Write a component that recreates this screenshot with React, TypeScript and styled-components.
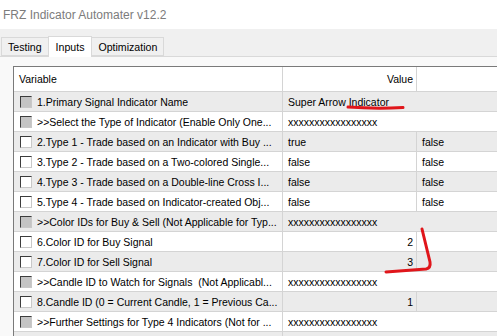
import { createGlobalStyle } from "styled-components";
import styled from "styled-components";

const GlobalStyle = createGlobalStyle`
  html, body {
    margin: 0;
    padding: 0;
    background: #ffffff;
    overflow: hidden;
  }
  body {
    font-family: "Liberation Sans", Arial, sans-serif;
  }
`;

const Window = styled.div`
  width: 497px;
  height: 336px;
  display: flex;
  flex-direction: column;
  overflow: hidden;
  position: relative;
`;

const TitleBar = styled.div`
  height: 29px;
  display: flex;
  align-items: center;
  padding-left: 3px;
  font-size: 12px;
  color: #7c7c7c;
  background: #ffffff;
`;

const TabStrip = styled.div`
  height: 27px;
  background: #f0f0f0;
  border-bottom: 1px solid #d9d9d9;
  display: flex;
  align-items: flex-end;
  padding-left: 2px;
`;

const Tab = styled.div<{ $active?: boolean }>`
  height: ${(p) => (p.$active ? "20px" : "17px")};
  padding: 0 ${(p) => (p.$active ? "7px" : "6px")};
  margin-bottom: ${(p) => (p.$active ? "-1px" : "0")};
  display: flex;
  align-items: center;
  font-size: 10.6px;
  color: #000;
  background: ${(p) => (p.$active ? "#ffffff" : "#f0f0f0")};
  border: 1px solid #d9d9d9;
  border-bottom: ${(p) => (p.$active ? "none" : "1px solid #d9d9d9")};
  margin-left: -1px;
  position: relative;
  z-index: ${(p) => (p.$active ? 1 : 0)};
`;

const Panel = styled.div`
  flex: 1;
  background: #f9f9f9;
  padding: 9px 0 0 13px;
  overflow: hidden;
`;

const Grid = styled.div`
  width: 560px;
  border-top: 1px solid #7a7a7a;
  border-left: 1px solid #7a7a7a;
  background: #ffffff;
  font-size: 10.5px;
  color: #000;
`;

const Row = styled.div<{ $shade?: boolean; $head?: boolean }>`
  display: grid;
  grid-template-columns: 269px 134px 1fr;
  height: ${(p) => (p.$head ? "24px" : "19px")};
  background: ${(p) => (p.$shade ? "#ebebeb" : "#ffffff")};
  border-bottom: 1px solid #d4d4d4;
`;

const Cell = styled.div<{ $align?: "left" | "right"; $span?: boolean; $last?: boolean }>`
  display: flex;
  align-items: center;
  justify-content: ${(p) => (p.$align === "right" ? "flex-end" : "flex-start")};
  padding: 0 ${(p) => (p.$align === "right" ? "3px" : "4px")} 0 5px;
  grid-column: ${(p) => (p.$span ? "span 2" : "auto")};
  border-right: ${(p) => (p.$last || p.$span ? "none" : "1px solid #d4d4d4")};
  white-space: nowrap;
  overflow: hidden;
  min-width: 0;
`;

const NameCell = styled(Cell)`
  padding-left: 6px;
  gap: 5px;
`;

const Label = styled.span`
  overflow: hidden;
  text-overflow: ellipsis;
  white-space: pre;
`;

const Check = styled.span<{ $disabled?: boolean }>`
  flex: 0 0 auto;
  width: 10px;
  height: 10px;
  border: 1px solid;
  border-color: #3c3c3c #c8c8c8 #c8c8c8 #3c3c3c;
  background: ${(p) => (p.$disabled ? "#c4c4c4" : "#ffffff")};
`;

const Marks = styled.svg`
  position: absolute;
  left: 0;
  top: 0;
  pointer-events: none;
`;

type Item = {
  name: string;
  value: string;
  extra?: string;
  disabled?: boolean;
  span?: boolean;
  right?: boolean;
};

const XS = "xxxxxxxxxxxxxxxxx";

const items: Item[] = [
  { name: "1.Primary Signal Indicator Name", value: "Super Arrow Indicator", disabled: true, span: true },
  { name: ">>Select the Type of Indicator (Enable Only One...", value: XS, disabled: true, span: true },
  { name: "2.Type 1 - Trade based on an Indicator with Buy ...", value: "true", extra: "false" },
  { name: "3.Type 2 - Trade based on a Two-colored Single...", value: "false", extra: "false" },
  { name: "4.Type 3 - Trade based on a Double-line Cross I...", value: "false", extra: "false" },
  { name: "5.Type 4 - Trade based on Indicator-created Obj...", value: "false", extra: "false" },
  { name: ">>Color IDs for Buy & Sell (Not Applicable for Typ...", value: XS, disabled: true, span: true },
  { name: "6.Color ID for Buy Signal", value: "2", extra: "", right: true },
  { name: "7.Color ID for Sell Signal", value: "3", extra: "", right: true },
  { name: ">>Candle ID to Watch for Signals  (Not Applicabl...", value: XS, disabled: true, span: true },
  { name: "8.Candle ID (0 = Current Candle, 1 = Previous Ca...", value: "1", extra: "", right: true },
  { name: ">>Further Settings for Type 4 Indicators (Not for ...", value: XS, disabled: true, span: true },
  { name: "", value: "", disabled: true, span: true },
];

export default function App() {
  return (
    <>
      <GlobalStyle />
      <Window>
        <TitleBar>FRZ Indicator Automater v12.2</TitleBar>
        <TabStrip>
          <Tab>Testing</Tab>
          <Tab $active>Inputs</Tab>
          <Tab>Optimization</Tab>
        </TabStrip>
        <Panel>
          <Grid>
            <Row $head>
              <Cell>Variable</Cell>
              <Cell $align="right">Value</Cell>
              <Cell $last />
            </Row>
            {items.map((it, i) => (
              <Row key={i} $shade={i % 2 === 0}>
                <NameCell>
                  <Check $disabled={it.disabled} />
                  <Label>{it.name}</Label>
                </NameCell>
                {it.span ? (
                  <Cell $span>{it.value}</Cell>
                ) : (
                  <>
                    <Cell $align={it.right ? "right" : "left"}>{it.value}</Cell>
                    <Cell $last>{it.extra}</Cell>
                  </>
                )}
              </Row>
            ))}
          </Grid>
        </Panel>
        <Marks width="497" height="336" viewBox="0 0 497 336">
          <path
            d="M348 107 Q375 109 403 107.5"
            stroke="#e0161b"
            strokeWidth="3"
            fill="none"
            strokeLinecap="round"
          />
          <path
            d="M422 229 L430 262 Q431 268 426 269 L386 272"
            stroke="#e0161b"
            strokeWidth="3"
            fill="none"
            strokeLinecap="round"
            strokeLinejoin="round"
          />
        </Marks>
      </Window>
    </>
  );
}
